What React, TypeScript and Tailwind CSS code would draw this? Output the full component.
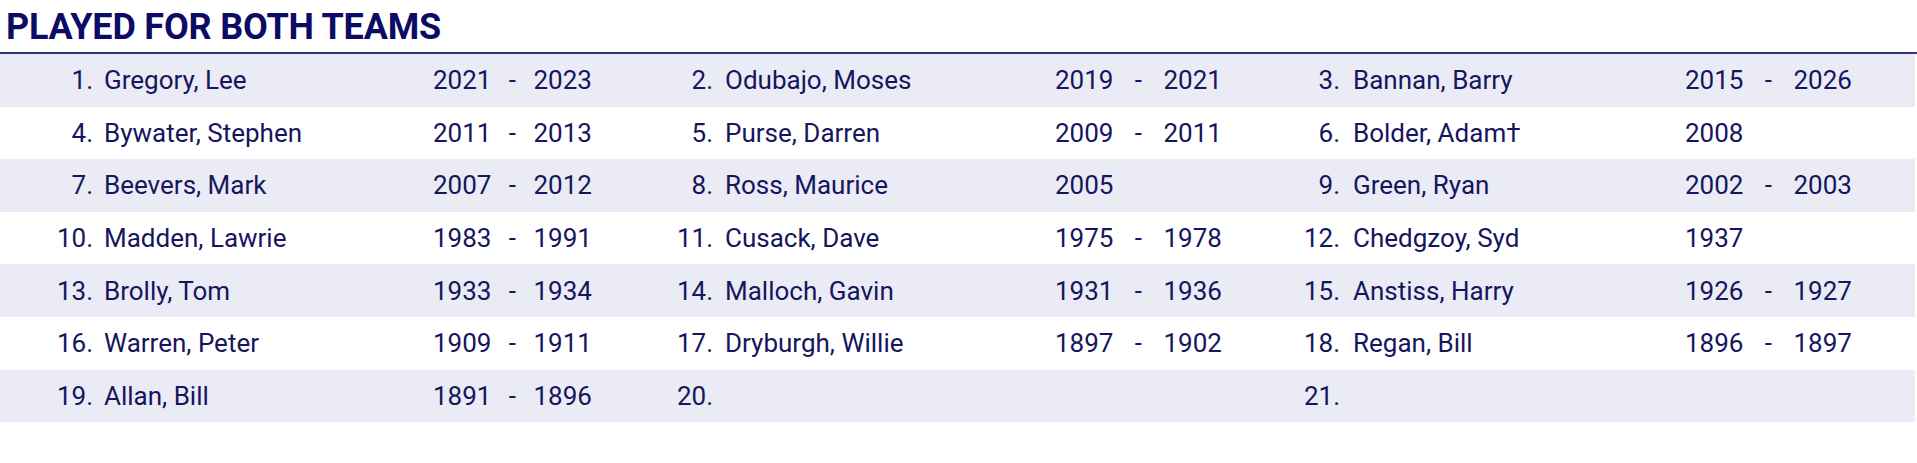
import React from "react";

type Entry = { n: string; name: string; a: string; b: string };

const rows: Entry[][] = [
  [
    { n: "1.", name: "Gregory, Lee", a: "2021", b: "2023" },
    { n: "2.", name: "Odubajo, Moses", a: "2019", b: "2021" },
    { n: "3.", name: "Bannan, Barry", a: "2015", b: "2026" },
  ],
  [
    { n: "4.", name: "Bywater, Stephen", a: "2011", b: "2013" },
    { n: "5.", name: "Purse, Darren", a: "2009", b: "2011" },
    { n: "6.", name: "Bolder, Adam†", a: "2008", b: "" },
  ],
  [
    { n: "7.", name: "Beevers, Mark", a: "2007", b: "2012" },
    { n: "8.", name: "Ross, Maurice", a: "2005", b: "" },
    { n: "9.", name: "Green, Ryan", a: "2002", b: "2003" },
  ],
  [
    { n: "10.", name: "Madden, Lawrie", a: "1983", b: "1991" },
    { n: "11.", name: "Cusack, Dave", a: "1975", b: "1978" },
    { n: "12.", name: "Chedgzoy, Syd", a: "1937", b: "" },
  ],
  [
    { n: "13.", name: "Brolly, Tom", a: "1933", b: "1934" },
    { n: "14.", name: "Malloch, Gavin", a: "1931", b: "1936" },
    { n: "15.", name: "Anstiss, Harry", a: "1926", b: "1927" },
  ],
  [
    { n: "16.", name: "Warren, Peter", a: "1909", b: "1911" },
    { n: "17.", name: "Dryburgh, Willie", a: "1897", b: "1902" },
    { n: "18.", name: "Regan, Bill", a: "1896", b: "1897" },
  ],
  [
    { n: "19.", name: "Allan, Bill", a: "1891", b: "1896" },
    { n: "20.", name: "", a: "", b: "" },
    { n: "21.", name: "", a: "", b: "" },
  ],
];

const namePad = ["pl-[11px]", "pl-[12px]", "pl-[13px]"];
const dashW = ["w-[42px]", "w-[50px]", "w-[50px]"];

export default function App() {
  return (
    <div
      className="w-[1917px] h-[463px] bg-white text-[#16165e]"
      style={{ fontFamily: "Roboto, 'Liberation Sans', sans-serif" }}
    >
      <div className="h-[52px] pl-[6px] pt-[9px] text-[36px] leading-[36px] font-bold text-[#0c0c66] tracking-[-0.2px]">
        PLAYED FOR BOTH TEAMS
      </div>
      <div className="h-[2px] bg-[#34347a]" />
      <div className="flex flex-col w-[1915px]">
        {rows.map((r, i) => (
          <div
            key={i}
            className={`grid h-[52.6px] items-center text-[26px] leading-[30px] grid-cols-[93px_340px_187px_93px_342px_195px_90px_345px_1fr] ${
              i % 2 === 0 ? "bg-[#ebebf5]" : "bg-white"
            }`}
          >
            {r.map((e, j) => (
              <React.Fragment key={j}>
                <div className="text-right">{e.n}</div>
                <div className={namePad[j]}>{e.name}</div>
                <div className="flex items-center">
                  <span>{e.a}</span>
                  {e.b && (
                    <>
                      <span className={`${dashW[j]} text-center`}>-</span>
                      <span>{e.b}</span>
                    </>
                  )}
                </div>
              </React.Fragment>
            ))}
          </div>
        ))}
      </div>
    </div>
  );
}
